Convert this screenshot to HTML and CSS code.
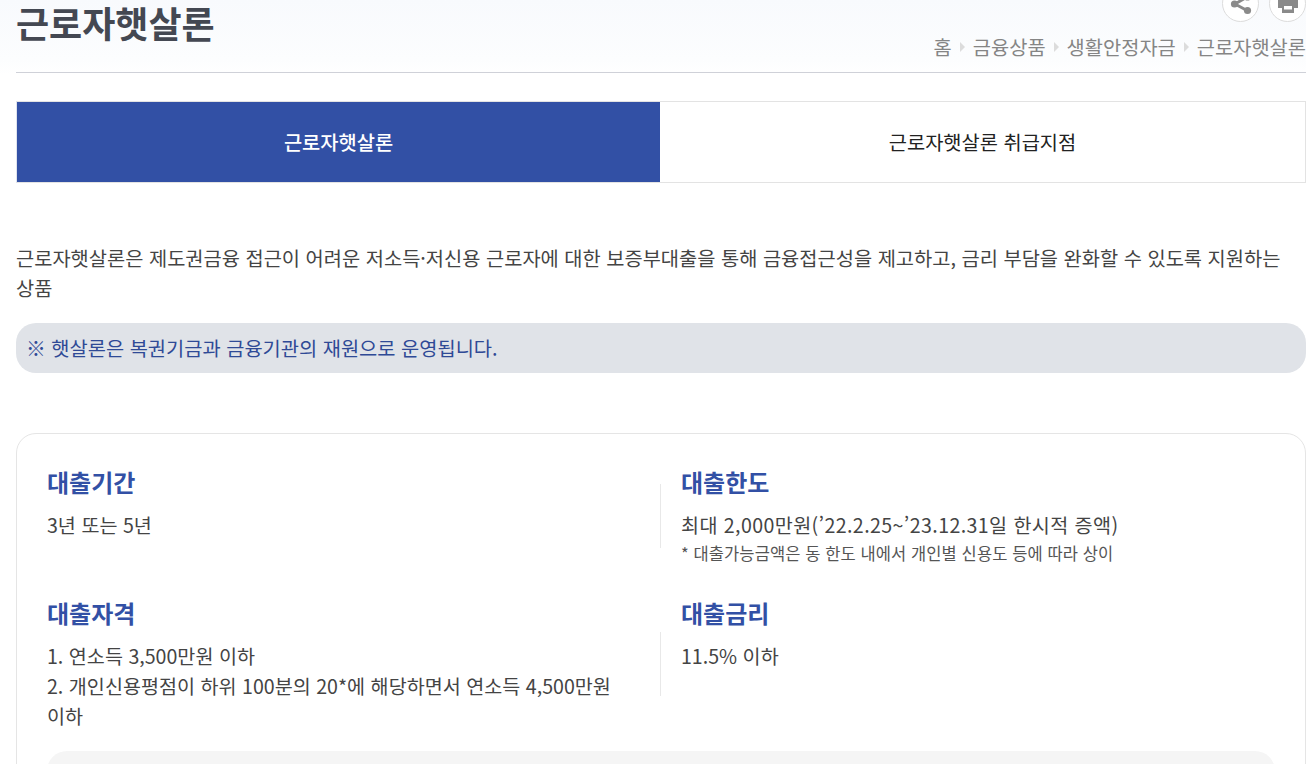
FILE: index.html
```html
<!DOCTYPE html>
<html lang="ko">
<head>
	<meta charset="UTF-8" />
	<title>근로자햇살론</title>
	<link rel="stylesheet" href="styles.css">
</head>
<body>
	<div class="wrap">
		<div class="head">
			<h1 class="title">근로자햇살론</h1>
			<div class="head_right">
				<div class="btns">
					<span class="btn">
						<svg width="22" height="22" viewBox="0 0 22 22"><path d="M5 11L17 4M5 11L17 17.5" stroke="#8a8a8a" stroke-width="3" fill="none"/><circle cx="4.5" cy="11" r="3.6" fill="#8a8a8a"/><circle cx="17.5" cy="4" r="3.6" fill="#8a8a8a"/><circle cx="17.5" cy="17.5" r="3.6" fill="#8a8a8a"/></svg>
					</span>
					<span class="btn">
						<svg width="22" height="22" viewBox="0 0 22 22"><path d="M5 0h12v4H5z" fill="#8a8a8a"/><path d="M1 4h20v11h-4v5H5v-5H1z" fill="#8a8a8a"/><path d="M7 13h8v3.5H7z" fill="#fff"/></svg>
					</span>
				</div>
				<div class="path">
					<span>홈</span><i class="arr"></i>
					<span>금융상품</span><i class="arr"></i>
					<span>생활안정자금</span><i class="arr"></i>
					<span>근로자햇살론</span>
				</div>
			</div>
		</div>

		<div class="tabs">
			<a class="tab on">근로자햇살론</a>
			<a class="tab">근로자햇살론 취급지점</a>
		</div>

		<p class="desc">근로자햇살론은 제도권금융 접근이 어려운 저소득·저신용 근로자에 대한 보증부대출을 통해 금융접근성을 제고하고, 금리 부담을 완화할 수 있도록 지원하는 상품</p>
		<p class="note">※ 햇살론은 복권기금과 금융기관의 재원으로 운영됩니다.</p>

		<div class="card">
			<div class="row">
				<div class="item">
					<h2>대출기간</h2>
					<p>3년 또는 5년</p>
				</div>
				<i class="line"></i>
				<div class="item">
					<h2>대출한도</h2>
					<p class="wide">최대 2,000만원(’22.2.25~’23.12.31일 한시적 증액)</p>
					<p class="small">* 대출가능금액은 동 한도 내에서 개인별 신용도 등에 따라 상이</p>
				</div>
			</div>
			<div class="row">
				<div class="item">
					<h2>대출자격</h2>
					<p>1. 연소득 3,500만원 이하</p>
					<p>2. 개인신용평점이 하위 100분의 20*에 해당하면서 연소득 4,500만원 이하</p>
				</div>
				<i class="line"></i>
				<div class="item">
					<h2>대출금리</h2>
					<p>11.5% 이하</p>
				</div>
			</div>
			<div class="gray"></div>
		</div>
	</div>
</body>
</html>
```

FILE: styles.css
```css
*{margin: 0;padding: 0;box-sizing: border-box;}
html,body{height: 764px;overflow: hidden;}
body{
	background: linear-gradient(#f8fafd 0,#fcfdfe 60px,#fff 75px);
	font-family: "Noto Sans CJK KR","Noto Sans",sans-serif;
	color: #444;
}
.wrap{margin: -15px 0 0 16px;width: 1290px;height: 779px;overflow: hidden;}

/* 상단 */
.head{
	display: flex;justify-content: space-between;
	height: 88px;border-bottom: 1px solid #cfd1d8;
}
.title{
	font-size: 36px;font-weight: 700;line-height: 44px;
	color: #444852;margin-top: 15px;
}
.head_right{display: flex;flex-direction: column;align-items: flex-end;}
.btns{display: flex;gap: 10px;}
.btn{
	display: flex;align-items: center;justify-content: center;
	width: 37px;height: 37px;border-radius: 50%;
	border: 1px solid #dcdcdc;background: #fff;
}
.path{
	display: flex;align-items: center;
	margin-top: 12px;
	font-size: 19.8px;line-height: 26px;color: #858585;
}
.arr{
	width: 0;height: 0;margin: 0 8px;
	border-left: 5px solid #dcdcdc;
	border-top: 5px solid transparent;border-bottom: 5px solid transparent;
}

/* 탭 */
.tabs{
	display: flex;margin-top: 28px;height: 82px;
	border: 1px solid #e3e3e3;border-left-color: #dfe3ee;
}
.tab{
	flex: 1;padding-bottom: 2px;
	display: flex;align-items: center;justify-content: center;
	font-size: 19.8px;font-weight: 400;color: #222;background: #fff;
}
.tab.on{flex: 0 0 643px;background: #3250a5;color: #fff;font-weight: 500;}

.desc{
	margin-top: 60px;word-break: keep-all;
	font-size: 19.8px;line-height: 30px;color: #444;
}
.note{
	margin-top: 20px;height: 50px;padding-left: 10px;
	background: #e0e3e8;border-radius: 20px;
	font-size: 19.8px;line-height: 50px;color: #2f4a96;
}

/* 내용 */
.card{
	margin-top: 60px;padding: 29px 30px 0;
	height: 500px;
	border: 1px solid #e5e5e5;border-radius: 20px;
	background: #fff;
}
.row{display: flex;align-items: stretch;margin-bottom: 28px;}
.item{flex: 1;}
.item:first-child{flex: 0 0 613px;padding-right: 32px;}
.item:last-child{padding-left: 20px;}
.line{
	align-self: center;flex: none;margin-top: 2px;
	width: 1px;height: 64px;background: #e8e8e8;
}
.item h2{
	font-size: 24px;font-weight: 700;line-height: 38px;color: #3250a5;
	margin-bottom: 9px;
}
.item p{font-size: 19.6px;line-height: 30px;color: #444;}
.item p.wide{letter-spacing: 0.4px;}
.item p.small{font-size: 16.5px;line-height: 26px;color: #555;letter-spacing: 0.1px;}
.gray{height: 100px;border-radius: 20px;background: #f5f5f5;margin-top: -8px;}
```
